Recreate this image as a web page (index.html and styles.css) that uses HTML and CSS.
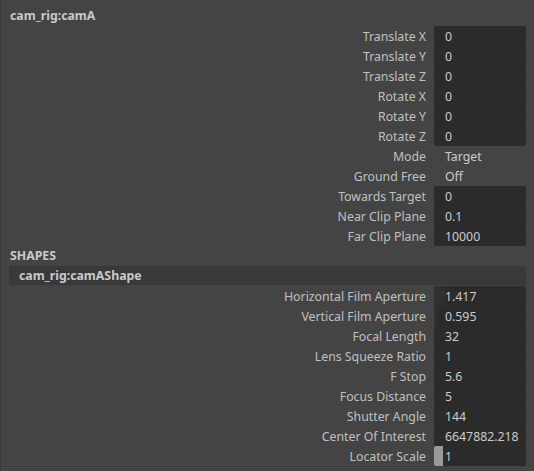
FILE: index.html
```html
<!DOCTYPE html>
<html>
<head>
<meta charset="utf-8">
<link rel="stylesheet" href="styles.css">
</head>
<body>
<div class="panel">
  <div class="title">cam_rig:camA</div>
  <div class="row"><span class="label">Translate X</span><span class="field">0</span></div>
  <div class="row"><span class="label">Translate Y</span><span class="field">0</span></div>
  <div class="row"><span class="label">Translate Z</span><span class="field">0</span></div>
  <div class="row"><span class="label">Rotate X</span><span class="field">0</span></div>
  <div class="row"><span class="label">Rotate Y</span><span class="field">0</span></div>
  <div class="row"><span class="label">Rotate Z</span><span class="field">0</span></div>
  <div class="row"><span class="label">Mode</span><span class="plain">Target</span></div>
  <div class="row"><span class="label">Ground Free</span><span class="plain">Off</span></div>
  <div class="row"><span class="label">Towards Target</span><span class="field">0</span></div>
  <div class="row"><span class="label">Near Clip Plane</span><span class="field">0.1</span></div>
  <div class="row"><span class="label">Far Clip Plane</span><span class="field">10000</span></div>
  <div class="title">SHAPES</div>
  <div class="subheader">cam_rig:camAShape</div>
  <div class="row"><span class="label">Horizontal Film Aperture</span><span class="field"><span class="fill" style="width:11px"></span>1.417</span></div>
  <div class="row"><span class="label">Vertical Film Aperture</span><span class="field"><span class="fill" style="width:3px"></span>0.595</span></div>
  <div class="row"><span class="label">Focal Length</span><span class="field">32</span></div>
  <div class="row"><span class="label">Lens Squeeze Ratio</span><span class="field">1</span></div>
  <div class="row"><span class="label">F Stop</span><span class="field">5.6</span></div>
  <div class="row"><span class="label">Focus Distance</span><span class="field">5</span></div>
  <div class="row"><span class="label">Shutter Angle</span><span class="field">144</span></div>
  <div class="row"><span class="label">Center Of Interest</span><span class="field">6647882.218</span></div>
  <div class="row"><span class="label">Locator Scale</span><span class="field"><span class="handle"></span>1</span></div>
</div>
</body>
</html>
```
FILE: styles.css
```css
html, body {
  margin: 0;
  padding: 0;
  background: #444444;
}
body {
  width: 534px;
  height: 471px;
  overflow: hidden;
  font-family: "Noto Sans", "Open Sans", sans-serif;
  font-size: 12.3px;
}
.panel {
  box-sizing: border-box;
  height: 471px;
  border-left: 1px solid #383838;
  padding: 6px 8px 0 0;
  display: flex;
  flex-direction: column;
  gap: 1px;
}
.title {
  height: 19px;
  line-height: 19px;
  padding-left: 9px;
  font-weight: bold;
  color: #c9c9c9;
}
.subheader {
  height: 19px;
  line-height: 19px;
  margin-left: 8px;
  padding-left: 10px;
  background: #393939;
  font-weight: bold;
  color: #c9c9c9;
}
.row {
  display: grid;
  grid-template-columns: 1fr 92px;
  column-gap: 8px;
  height: 19px;
  line-height: 19px;
}
.label {
  text-align: right;
  color: #c0c0c0;
  white-space: nowrap;
  padding-top: 1px;
}
.field {
  position: relative;
  background: #2b2b2b;
  border-radius: 2px;
  padding-left: 11px;
  padding-top: 1px;
  color: #cccccc;
  overflow: hidden;
  white-space: nowrap;
}
.plain {
  padding-left: 11px;
  padding-top: 1px;
  color: #cccccc;
}
.fill {
  position: absolute;
  left: 0;
  top: 0;
  bottom: 0;
  background: #303030;
}
.handle {
  position: absolute;
  left: 0;
  top: 0;
  bottom: 0;
  width: 9px;
  background: #9a9a9a;
}
```
